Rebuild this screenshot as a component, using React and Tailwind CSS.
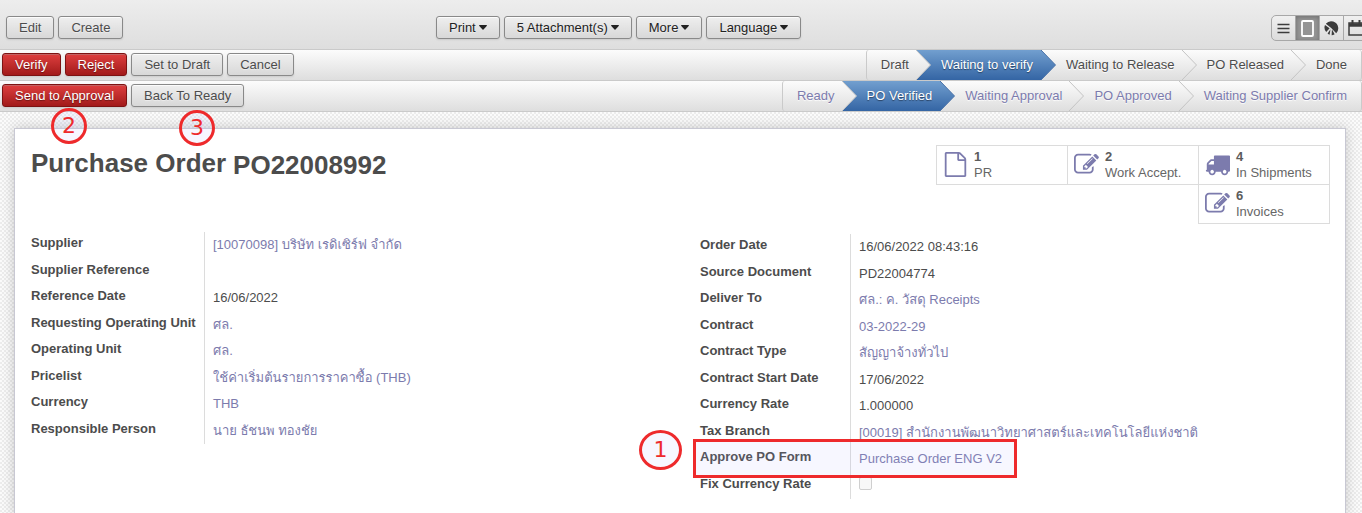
const btn =
  "flex h-[23px] items-center rounded-[3px] border px-3 text-[13px] leading-none whitespace-nowrap";
const grayBtn =
  btn +
  " border-[#898989] bg-linear-to-b from-[#efefef] to-[#d8d8d8] text-[#4c4c4c] shadow-[0_1px_2px_rgba(0,0,0,0.1),inset_0_1px_0_rgba(255,255,255,0.8)] [text-shadow:0_1px_1px_rgba(255,255,255,0.5)]";
const redBtn =
  btn +
  " border-[#7d1313] bg-linear-to-b from-[#df3f3f] to-[#a21a1a] text-white shadow-[0_1px_2px_rgba(0,0,0,0.1),inset_0_1px_0_rgba(155,155,155,0.4)] [text-shadow:0_1px_1px_rgba(0,0,0,0.4)]";

function Button({ children, red, menu }) {
  return (
    <button type="button" className={red ? redBtn : grayBtn}>
      {menu ? (
        <>
          <span className="text-[#222]">{children}</span>
          <svg
            width="8"
            height="5"
            viewBox="0 0 8 5"
            fill="#222"
            aria-hidden="true"
            className="ml-[3px]"
          >
            <path d="M0.500 0h7q.7 .3 .2 .9L4.500 4.500q-.5 .4-1 0L.3 .9Q-.2 .3 .5 0Z" />
          </svg>
        </>
      ) : (
        children
      )}
    </button>
  );
}

function Arrow({ active, beforeActive }) {
  return (
    <svg
      width="15"
      height="30"
      viewBox="0 0 15 30"
      aria-hidden="true"
      className={
        beforeActive ? "shrink-0 bg-linear-to-b from-[#729fcf] to-[#3465a4]" : "shrink-0"
      }
    >
      <defs>
        <linearGradient id="stageLight" x1="0" y1="0" x2="0" y2="1">
          <stop offset="0" stopColor="#fcfcfc" />
          <stop offset="1" stopColor="#dedede" />
        </linearGradient>
        <linearGradient id="stageBlue" x1="0" y1="0" x2="0" y2="1">
          <stop offset="0" stopColor="#729fcf" />
          <stop offset="1" stopColor="#3465a4" />
        </linearGradient>
      </defs>
      {active && <path d="M0 0L14.5 15L0 30Z" fill="url(#stageBlue)" />}
      {beforeActive && <path d="M0 0L14.5 15L0 30Z" fill="url(#stageLight)" />}
      <path
        d="M0 0L14.5 15L0 30"
        fill="none"
        stroke={active ? "#4a72a8" : "#c4c4c4"}
        strokeWidth="1"
      />
    </svg>
  );
}

function StatusBar({ steps, current, className }) {
  return (
    <ol
      className={
        "flex h-[30px] rounded-[3px] border-x border-[#cacaca] text-[13px] leading-[30px] whitespace-nowrap " +
        className
      }
    >
      {steps.map((s, i) => {
        const active = i === current;
        const last = i === steps.length - 1;
        return (
          <li key={s} className="flex" aria-current={active ? "step" : undefined}>
            <span
              className={
                (i === 0 ? "pl-[14px] " : "pl-[10px] ") +
                (last ? "pr-[14px] " : active ? "pr-2 " : "pr-[7px] ") +
                (active
                  ? "bg-linear-to-b from-[#729fcf] to-[#3465a4] text-white [text-shadow:0_1px_1px_#294263]"
                  : "[text-shadow:0_1px_1px_#fff]")
              }
            >
              {s}
            </span>
            {!last && <Arrow active={active} beforeActive={i + 1 === current} />}
          </li>
        );
      })}
    </ol>
  );
}

const ICONS = {
  file: "M1596 380q28 28 48 76t20 88v1152q0 40-28 68t-68 28h-1344q-40 0-68-28t-28-68v-1600q0-40 28-68t68-28h896q40 0 88 20t76 48zm-444-244v376h376q-10-29-22-41l-313-313q-12-12-41-22zm384 1528v-1024h-416q-40 0-68-28t-28-68v-416h-768v1536h1280z",
  edit: "M888 1184l116-116-152-152-116 116v56h96v96h56zm440-720q-16-16-33 1l-350 350q-17 17-1 33t33-1l350-350q17-17 1-33zm80 594v190q0 119-84.5 203.500t-203.500 84.500h-832q-119 0-203.500-84.500t-84.500-203.500v-832q0-119 84.500-203.500t203.500-84.500h832q63 0 117 25 15 7 18 23 3 17-9 29l-49 49q-14 14-32 8-23-6-45-6h-832q-66 0-113 47t-47 113v832q0 66 47 113t113 47h832q66 0 113-47t47-113v-126q0-13 9-22l64-64q15-15 35-7t20 29zm-96-738l288 288-672 672h-288v-288zm444 132l-92 92-288-288 92-92q28-28 68-28t68 28l152 152q28 28 28 68t-28 68z",
  truck:
    "M640 1408q0-52-38-90t-90-38-90 38-38 90 38 90 90 38 90-38 38-90zm-384-512h384v-256h-158q-13 0-22 9l-195 195q-9 9-9 22v30zm1280 512q0-52-38-90t-90-38-90 38-38 90 38 90 90 38 90-38 38-90zm256-1088v1024q0 15-4 26.500t-13.500 18.500-16.500 11.500-23.500 6-22.500 2-25.500 0-22.500-.5q0 106-75 181t-181 75-181-75-75-181h-384q0 106-75 181t-181 75-181-75-75-181h-64q-3 0-22.500.5t-25.500 0-22.500-2-23.500-6-16.500-11.500-13.500-18.500-4-26.500q0-26 19-45t45-19v-320q0-8-.5-35t0-38 2.500-34.500 6.500-37 14-30.500 22.500-30l198-198q19-19 50.500-32t58.500-13h160v-192q0-26 19-45t45-19h1024q26 0 45 19t19 45z",
};

function Stat({ icon, count, label }) {
  return (
    <button
      type="button"
      className="-mb-px -ml-px flex h-10 w-[132px] items-start border border-[#dcdcdc] pt-[3px] pl-[6px] text-left text-[13px] leading-4 text-[#666]"
    >
      <svg
        width="25"
        height="25"
        viewBox="0 0 1792 1792"
        fill="#7c7bad"
        aria-hidden="true"
        className="mt-[3px] mr-[6px] shrink-0"
      >
        <path d={ICONS[icon]} />
      </svg>
      <span>
        <b className="block text-[#5c5c5c]">{count}</b>
        <span className="block">{label}</span>
      </span>
    </button>
  );
}

function Marker({ children, className }) {
  return (
    <span
      className={
        "absolute z-20 flex items-center justify-center rounded-[50%] border-3 border-[#ee2a2c] bg-[#b0b0ff]/10 font-['DejaVu_Sans',sans-serif] text-[22px] leading-none text-[#ee2a2c] " +
        className
      }
    >
      {children}
    </span>
  );
}

function Fields({ rows, className = "", labelClass }) {
  return (
    <dl className={"text-[13px] leading-[18px] " + className}>
      {rows.map(([label, value, kind]) => (
        <div key={label} className="relative flex odd:h-[27px] even:h-[26px]">
          <dt
            className={
              "shrink-0 border-r border-[#dcdcdc] pt-[2px] font-bold whitespace-nowrap " +
              labelClass
            }
          >
            {kind === "check" ? <label htmlFor="fix-rate">{label}</label> : label}
          </dt>
          <dd className="pt-1 pl-2 whitespace-nowrap">
            {kind === "check" ? (
              <input
                id="fix-rate"
                type="checkbox"
                className="block size-[13px] appearance-none rounded-[2px] border border-[#cfcfcf] bg-[#f8f8f8]"
              />
            ) : kind ? (
              <a href="#" className="text-[#7c7bad]">
                {value}
              </a>
            ) : (
              value
            )}
          </dd>
          {kind === "marked" && (
            <>
              <span className="absolute -top-[7px] -left-[7px] z-10 h-[39px] w-[324px] border-3 border-[#ee2a2c] bg-[#b0b0ff]/10" />
              <Marker className="-top-4 -left-[61px] h-10 w-[43px]">1</Marker>
            </>
          )}
        </div>
      ))}
    </dl>
  );
}

const LEFT = [
  ["Supplier", "[10070098] บริษัท เรดิเซิร์ฟ จำกัด", "link"],
  ["Supplier Reference", ""],
  ["Reference Date", "16/06/2022"],
  ["Requesting Operating Unit", "ศล.", "link"],
  ["Operating Unit", "ศล.", "link"],
  ["Pricelist", "ใช้ค่าเริ่มต้นรายการราคาซื้อ (THB)", "link"],
  ["Currency", "THB", "link"],
  ["Responsible Person", "นาย ธัชนพ ทองชัย", "link"],
];

const RIGHT = [
  ["Order Date", "16/06/2022 08:43:16"],
  ["Source Document", "PD22004774"],
  ["Deliver To", "ศล.: ค. วัสดุ Receipts", "link"],
  ["Contract", "03-2022-29", "link"],
  ["Contract Type", "สัญญาจ้างทั่วไป", "link"],
  ["Contract Start Date", "17/06/2022"],
  ["Currency Rate", "1.000000"],
  ["Tax Branch", "[00019] สำนักงานพัฒนาวิทยาศาสตร์และเทคโนโลยีแห่งชาติ", "link"],
  ["Approve PO Form", "Purchase Order ENG V2", "marked"],
  ["Fix Currency Rate", "", "check"],
];

const viewBtn = "flex w-6 items-center justify-center border-r border-[#a8a8a8]";

function ViewSwitch() {
  return (
    <div className="-mr-[7px] flex h-[26px] shrink-0 overflow-hidden rounded-[5px] border border-[#a8a8a8] bg-linear-to-b from-[#f0f0f0] to-[#dcdcdc]">
      <button type="button" aria-label="List" className={viewBtn}>
        <svg width="13" height="11" viewBox="0 0 13 11" stroke="#3c3c3c" strokeWidth="1.6">
          <path d="M0.500 1.500h12M0.500 5.500h12M0.500 9.500h12" />
        </svg>
      </button>
      <button
        type="button"
        aria-label="Form"
        className={viewBtn + " bg-[#949494] shadow-[inset_0_1px_4px_rgba(0,0,0,0.25)]"}
      >
        <svg width="13" height="17" viewBox="0 0 13 17" fill="none" stroke="#fff">
          <rect x="1" y="1" width="11" height="15" rx="1" strokeWidth="1.800" />
        </svg>
      </button>
      <button type="button" aria-label="Graph" className={viewBtn}>
        <svg width="15" height="15" viewBox="0 0 15 15" fill="#3c3c3c">
          <path d="M7.200 7L1.800 2.800A7 7 0 0 1 14.200 6.500A6.800 6.800 0 0 1 12.200 12.200Z" />
          <path d="M5.600 7.200L1 4A6.800 6.800 0 0 0 2.200 11Z" />
          <path d="M6.500 8.200L3.600 12.400A6.800 6.800 0 0 0 5.600 13.800Z" />
          <path d="M8 8.600L10.600 13.200A6.800 6.800 0 0 1 7.600 14.200Z" />
        </svg>
      </button>
      <button type="button" aria-label="Calendar" className="flex w-6 items-center justify-center">
        <svg width="16" height="17" viewBox="0 0 16 17" fill="none" stroke="#3c3c3c">
          <rect x="1" y="3" width="14" height="12" strokeWidth="1.500" />
          <path d="M1 5h14" strokeWidth="3.500" />
          <path d="M4.500 0v4M11.500 0v4" strokeWidth="2" />
        </svg>
      </button>
    </div>
  );
}

const rowBar =
  "flex h-[31px] items-center justify-between border-b border-[#cacaca] bg-linear-to-b from-[#fcfcfc] to-[#dedede] pl-[2px]";

export default function App() {
  return (
    <div className="flex h-screen flex-col overflow-hidden bg-[#f6f6f6] bg-[repeating-conic-gradient(#ececec_0_25%,#fbfbfb_0_50%)] bg-size-[4px_4px] font-['Liberation_Sans','Loma','Waree','Garuda','Noto_Sans_Thai_Looped','Noto_Looped_Thai',Arial,sans-serif] text-[13px] text-[#4c4c4c]">
      <header className="relative shrink-0">
        <div className="flex h-[50px] items-start overflow-hidden border-b border-[#cacaca] bg-linear-to-b from-[#ededed] to-[#dedede] pt-[15px]">
          <div className="flex w-[436px] shrink-0 gap-1 pt-px pl-[6px]">
            <Button>Edit</Button>
            <Button>Create</Button>
          </div>
          <div className="flex grow gap-1 pt-px">
            <Button menu>Print</Button>
            <Button menu>5 Attachment(s)</Button>
            <Button menu>More</Button>
            <Button menu>Language</Button>
          </div>
          <ViewSwitch />
        </div>
        <div className={rowBar}>
          <div className="flex gap-1 pb-px">
            <Button red>Verify</Button>
            <Button red>Reject</Button>
            <Button>Set to Draft</Button>
            <Button>Cancel</Button>
          </div>
          <StatusBar
            current={1}
            className="text-[#4c4c4c]"
            steps={["Draft", "Waiting to verify", "Waiting to Release", "PO Released", "Done"]}
          />
        </div>
        <div className={rowBar}>
          <div className="flex gap-1 pb-px">
            <Button red>Send to Approval</Button>
            <Button>Back To Ready</Button>
          </div>
          <StatusBar
            current={1}
            className="text-[#7c7bad]"
            steps={["Ready", "PO Verified", "Waiting Approval", "PO Approved", "Waiting Supplier Confirm"]}
          />
        </div>
        <Marker className="top-[108px] left-[51px] size-9">2</Marker>
        <Marker className="top-[110px] left-[179px] size-9">3</Marker>
      </header>

      <main className="mt-4 mr-4 ml-[14px] flex grow flex-col">
        <section className="grow border border-b-0 border-[#c8c8d3] bg-white py-4 pr-[15px] pl-4 shadow-[0_0_12px_rgba(0,0,0,0.2)]">
          <div className="flex items-start justify-between">
            <h1 className="flex gap-[7px] text-[26px] leading-9 font-bold whitespace-nowrap">
              <span>Purchase Order</span>
              <span className="pt-[2px]">PO22008992</span>
            </h1>
            <div className="flex w-[395px] flex-wrap justify-end pb-px pl-px">
              <Stat icon="file" count="1" label="PR" />
              <Stat icon="edit" count="2" label="Work Accept." />
              <Stat icon="truck" count="4" label="In Shipments" />
              <Stat icon="edit" count="6" label="Invoices" />
            </div>
          </div>
          <div className="mt-2 grid grid-cols-2 gap-x-[39px]">
            <Fields rows={LEFT} labelClass="w-[174px]" />
            <Fields rows={RIGHT} className="pt-[2px]" labelClass="w-[151px]" />
          </div>
        </section>
      </main>
    </div>
  );
}
